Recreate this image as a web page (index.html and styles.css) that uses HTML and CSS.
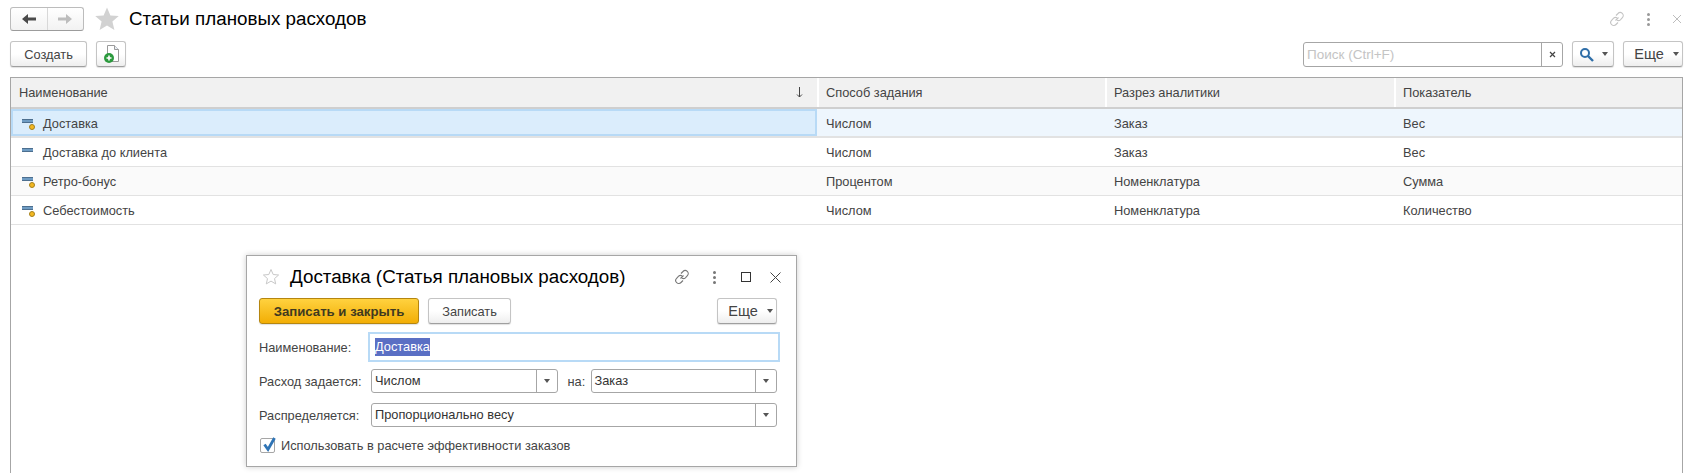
FILE: index.html
```html
<!DOCTYPE html>
<html lang="ru">
<head>
  <meta charset="UTF-8">
  <title>Статьи плановых расходов</title>
  <link rel="stylesheet" href="styles.css">
</head>
<body>
  <div class="page">
    <header class="titlebar">
      <div class="nav">
        <button class="nav-btn"><svg width="16" height="12" viewBox="0 0 16 12"><path d="M1 6l6-5v3.5h8v3H7V11z" fill="#4a4a4a"/></svg></button>
        <button class="nav-btn"><svg width="16" height="12" viewBox="0 0 16 12"><path d="M15 6L9 1v3.5H1v3h8V11z" fill="#bdbdbd"/></svg></button>
      </div>
      <svg class="fav" width="24" height="24" viewBox="0 0 24 24"><path d="M12 .5l3.4 7.9 8.4.7-6.4 5.5 2 8.3L12 18.5l-7.4 4.4 2-8.3L.2 9.1l8.4-.7z" fill="#d2d2d2"/></svg>
      <h1 class="title">Статьи плановых расходов</h1>
      <div class="win-icons">
        <svg width="16" height="16" viewBox="0 0 16 16" fill="none" stroke="#c4c4c4" stroke-width="1.1"><path d="M6.5 9.5l3-3M7 4.5l2-2a3 3 0 0 1 4.4 4.2l-2 2.1a3 3 0 0 1-3.4.4M9 11.500l-2 2a3 3 0 0 1-4.400-4.200l2-2.100a3 3 0 0 1 3.400-.4"/></svg>
        <span class="dots dots-light"><i></i><i></i><i></i></span>
        <svg width="10" height="10" viewBox="0 0 10 10" stroke="#bdbdbd" stroke-width="1"><path d="M1 1l8 8M9 1l-8 8"/></svg>
      </div>
    </header>

    <div class="toolbar">
      <button class="btn btn-create">Создать</button>
      <button class="btn btn-copy">
        <svg width="18" height="20" viewBox="0 0 18 20"><path d="M5.500 1.500h7l4 4v12h-11z" fill="#fff" stroke="#9a9a9a"/><path d="M12.500 1.500v4h4" fill="#e8eef5" stroke="#9a9a9a"/><circle cx="7" cy="14" r="5" fill="#2c9a3e"/><path d="M4.500 14h5M7 11.500v5" stroke="#fff" stroke-width="1.600"/></svg>
      </button>
      <div class="search">
        <span class="search-text">Поиск (Ctrl+F)</span>
        <span class="search-clear"><svg width="7" height="7" viewBox="0 0 7 7" stroke="#444" stroke-width="1.200"><path d="M1 1l5 5M6 1L1 6"/></svg></span>
      </div>
      <button class="btn btn-find">
        <svg width="15" height="15" viewBox="0 0 15 15" fill="none" stroke="#2f6ea8" stroke-width="2"><circle cx="6" cy="6" r="4"/><path d="M9 9l5 5" stroke-width="2.400"/></svg>
        <span class="caret"></span>
      </button>
      <button class="btn btn-more">Еще<span class="caret"></span></button>
    </div>

    <div class="grid">
      <div class="row head">
        <div class="cell first">Наименование<svg class="sort" width="7" height="11" viewBox="0 0 7 11" fill="none" stroke="#444"><path d="M3.500 0v10M1 7.500l2.500 2.500L6 7.500"/></svg></div>
        <div class="cell">Способ задания</div>
        <div class="cell">Разрез аналитики</div>
        <div class="cell">Показатель</div>
      </div>
      <div class="row selected">
        <div class="cell first current"><span class="mark"><span class="bar"></span><span class="dot"></span></span>Доставка</div>
        <div class="cell">Числом</div>
        <div class="cell">Заказ</div>
        <div class="cell">Вес</div>
      </div>
      <div class="row">
        <div class="cell first"><span class="mark"><span class="bar"></span></span>Доставка до клиента</div>
        <div class="cell">Числом</div>
        <div class="cell">Заказ</div>
        <div class="cell">Вес</div>
      </div>
      <div class="row alt">
        <div class="cell first"><span class="mark"><span class="bar"></span><span class="dot"></span></span>Ретро-бонус</div>
        <div class="cell">Процентом</div>
        <div class="cell">Номенклатура</div>
        <div class="cell">Сумма</div>
      </div>
      <div class="row">
        <div class="cell first"><span class="mark"><span class="bar"></span><span class="dot"></span></span>Себестоимость</div>
        <div class="cell">Числом</div>
        <div class="cell">Номенклатура</div>
        <div class="cell">Количество</div>
      </div>
    </div>
  </div>

  <section class="dialog">
    <div class="dlg-head">
      <svg width="18" height="18" viewBox="0 0 18 18"><path d="M9 1.500l2.200 5 5.400.5-4.100 3.600 1.200 5.300L9 13.100l-4.700 2.800 1.200-5.300L1.400 7l5.400-.5z" fill="#fff" stroke="#c8c8c8"/></svg>
      <h2 class="dlg-title">Доставка (Статья плановых расходов)</h2>
      <div class="dlg-icons">
        <svg class="dlg-link" width="16" height="16" viewBox="0 0 16 16" fill="none" stroke="#777" stroke-width="1.100"><path d="M6.500 9.500l3-3M7 4.500l2-2a3 3 0 0 1 4.400 4.200l-2 2.100a3 3 0 0 1-3.400.4M9 11.500l-2 2a3 3 0 0 1-4.400-4.200l2-2.100a3 3 0 0 1 3.400-.4"/></svg>
        <span class="dots dlg-dots"><i></i><i></i><i></i></span>
        <svg class="dlg-max" width="10" height="10" viewBox="0 0 10 10" fill="none" stroke="#333"><rect x=".5" y=".5" width="9" height="9"/></svg>
        <svg width="11" height="11" viewBox="0 0 11 11" stroke="#444"><path d="M.5.500l10 10M10.500.500l-10 10"/></svg>
      </div>
    </div>
    <div class="dlg-actions">
      <button class="btn btn-save-close">Записать и закрыть</button>
      <button class="btn btn-save">Записать</button>
      <button class="btn btn-more dlg-more">Еще<span class="caret"></span></button>
    </div>
    <div class="form-row name-row">
      <label class="lbl lbl-name">Наименование:</label>
      <div class="name-input"><span class="sel-text">Доставка</span></div>
    </div>
    <div class="form-row">
      <label class="lbl lbl-wide">Расход задается:</label>
      <div class="combo combo-left"><span>Числом</span><span class="combo-btn"><span class="caret"></span></span></div>
      <label class="lbl lbl-on">на:</label>
      <div class="combo combo-right"><span>Заказ</span><span class="combo-btn"><span class="caret"></span></span></div>
    </div>
    <div class="form-row">
      <label class="lbl lbl-wide">Распределяется:</label>
      <div class="combo combo-full"><span>Пропорционально весу</span><span class="combo-btn"><span class="caret"></span></span></div>
    </div>
    <div class="check-row">
      <span class="check"><svg width="17" height="17" viewBox="0 0 17 17" fill="none" stroke="#2f74b5" stroke-width="2.800"><path d="M3.500 7.500l3.500 5 6.500-11.500"/></svg></span>
      <span class="check-text">Использовать в расчете эффективности заказов</span>
    </div>
  </section>
</body>
</html>
```

FILE: styles.css
```css
* { box-sizing: border-box; }
html, body { margin: 0; height: 100%; }
body {
  position: relative;
  overflow: hidden;
  background: #fff;
  font-family: "Liberation Sans", Arial, sans-serif;
  font-size: 12.8px;
  color: #444;
}
h1, h2 { margin: 0; font-weight: normal; color: #000; }
button { font: inherit; color: inherit; padding: 0; }

.page { padding: 7px 6px 0 10px; }

.titlebar { display: flex; align-items: center; height: 24px; }
.nav {
  display: flex;
  width: 74px;
  height: 24px;
  border: 1px solid #bcbcbc;
  border-bottom-color: #9c9c9c;
  border-radius: 3px;
  background: linear-gradient(#fff, #f2f2f2);
}
.nav-btn { flex: 1; display: flex; align-items: center; justify-content: center; border: 0; background: none; }
.nav-btn + .nav-btn { border-left: 1px solid #d8d8d8; }
.fav { margin: 0 10px 0 11px; }
.title { font-size: 18.8px; }
.win-icons { margin-left: auto; margin-right: 1px; display: flex; align-items: center; gap: 22px; }
.dots { display: flex; flex-direction: column; gap: 2px; }
.dots i { width: 3px; height: 3px; border-radius: 50%; background: #777; }
.dots-light i { background: #999; }

.toolbar { display: flex; align-items: center; height: 26px; margin-top: 10px; }
.btn {
  display: flex;
  align-items: center;
  justify-content: center;
  height: 26px;
  border: 1px solid #c4c4c4;
  border-bottom-color: #9f9f9f;
  border-radius: 3px;
  background: linear-gradient(#fff 50%, #eee);
  box-shadow: 0 1px 1px rgba(0, 0, 0, .12);
}
.btn-create { width: 77px; }
.btn-copy { width: 30px; margin-left: 9px; }
.search {
  display: flex;
  width: 260px;
  height: 25px;
  margin-left: auto;
  border: 1px solid #a6a6a6;
  border-radius: 3px;
  background: #fff;
}
.search-text { flex: 1; padding-left: 3px; line-height: 23px; color: #c4c4c4; font-size: 13.5px; }
.search-clear { display: flex; align-items: center; justify-content: center; width: 21px; border-left: 1px solid #a6a6a6; }
.btn-find { width: 42px; margin-left: 9px; gap: 8px; }
.btn-more { width: 60px; margin-left: 9px; padding-left: 7px; gap: 9px; font-size: 14.5px; }
.caret {
  display: inline-block;
  border: 3.500px solid transparent;
  border-top: 4px solid #555;
  border-bottom: 0;
}

.grid {
  height: 400px;
  margin-top: 10px;
  border-top: 1px solid #a6a6a6;
  border-left: 1px solid #a6a6a6;
  border-right: 1px solid #a6a6a6;
}
.row {
  display: grid;
  grid-template-columns: 806px 288px 289px 1fr;
  height: 29px;
  border-bottom: 1px solid #e2e2e2;
}
.cell {
  display: flex;
  align-items: center;
  padding-left: 8px;
  border-left: 1px solid transparent;
}
.cell.first { border-left: 0; padding-left: 8px; }
.head {
  height: 31px;
  background: #f1f1f1;
  border-bottom: 2px solid #cfcfcf;
}
.head .cell { border-left: 2px solid #fff; padding-left: 7px; }
.head .cell.first { border-left: 0; padding-left: 8px; }
.sort { margin-left: auto; margin-right: 14px; }
.selected { background: #eef6fd; border-bottom: 2px solid #e2e2e2; }
.selected .cell { padding-top: 2px; }
.current {
  background: #dbedfc;
  border: 2px solid #b8daf6;
}
.cell.first.current { border-left: 2px solid #b8daf6; padding-left: 8px; padding-top: 1px; }
.alt { background: #fafafa; }
.mark { position: relative; display: inline-block; width: 22px; height: 14px; margin-left: 2px; flex: none; }
.cell.current .mark { margin-left: 0; }
.bar {
  position: absolute;
  left: 1px;
  top: 3px;
  width: 11px;
  height: 4px;
  background: #6f9cc3;
  border: 1px solid #4d6f8f;
  border-width: 1px 0;
}
.dot {
  position: absolute;
  left: 8px;
  top: 8px;
  width: 6px;
  height: 6px;
  border-radius: 50%;
  background: #f3b821;
  border: 1px solid #a5801b;
}

.dialog {
  position: absolute;
  left: 246px;
  top: 255px;
  width: 551px;
  height: 212px;
  padding: 0 19px 0 12px;
  background: #fff;
  border: 1px solid #a6a6a6;
  box-shadow: 0 0 6px rgba(0, 0, 0, .2);
}
.dlg-head { display: flex; align-items: center; height: 42px; padding-left: 3px; }
.dlg-title { margin-left: 10px; font-size: 18.8px; }
.dlg-icons { margin-left: auto; margin-right: -4px; display: flex; align-items: center; gap: 21px; }
.dlg-link { margin-right: 2px; }
.dlg-dots { margin-right: 4px; }
.dlg-max { margin-right: -2px; }
.dlg-actions { display: flex; align-items: center; height: 26px; }
.btn-save-close {
  width: 160px;
  font-size: 13.2px;
  font-weight: bold;
  color: #3f3a20;
  border-color: #b5860f;
  background: linear-gradient(#ffd23f, #f2ae05);
}
.btn-save { width: 83px; margin-left: 9px; }
.dlg-more { margin-left: auto; }

.form-row { display: flex; align-items: center; height: 24px; margin-top: 10px; }
.name-row { height: 30px; margin-top: 8px; margin-right: -3px; }
.lbl { flex: none; }
.lbl-name { width: 109px; }
.lbl-wide { width: 112px; }
.name-input {
  flex: 1;
  height: 30px;
  padding-left: 5px;
  line-height: 26px;
  border: 2px solid #b8daf6;
  background: #fff;
}
.sel-text { display: inline-block; height: 18px; line-height: 18px; background: #5a6fc4; color: #fff; }
.name-row + .form-row { margin-top: 7px; }
.combo {
  display: flex;
  height: 24px;
  padding-left: 3px;
  line-height: 22px;
  border: 1px solid #a6a6a6;
  border-radius: 3px;
  color: #333;
}
.combo > span:first-child { flex: 1; }
.combo-left { width: 187px; }
.combo-right { width: 187px; }
.combo-full { width: 407px; }
.combo-btn { display: flex; align-items: center; justify-content: center; width: 21px; border-left: 1px solid #a6a6a6; }
.lbl-on { width: 33px; padding-left: 10px; }
.check-row { display: flex; align-items: center; height: 16px; margin-top: 10px; padding-left: 1px; }
.check {
  width: 15px;
  height: 15px;
  border: 1px solid #a6a6a6;
  border-radius: 2px;
  background: #fff;
  margin-right: 6px;
}
.check svg { display: block; margin-top: -2px; }
```
